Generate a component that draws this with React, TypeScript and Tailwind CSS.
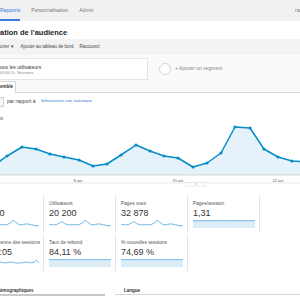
import React from 'react';

// main chart points (x, y) in page px, chart box starts at y=110
const pts: [number, number][] = [
  [-7, 166], [7, 156], [22, 147], [36, 149], [50, 154], [64, 157], [79, 160], [93, 166],
  [107, 164], [121, 155], [136, 145], [150, 151], [164, 156], [178, 158], [193, 167],
  [207, 163], [221, 153], [235, 127], [250, 128], [264, 149], [278, 157], [292, 161], [306, 162],
];

const waveA = [0.4, 0.35, 0.3, 0.35, 0.55, 0.8, 0.5, 0.35, 0.3, 0.3, 0.35, 0.3, 0.4, 0.6, 0.95, 0.7, 0.4, 0.3, 0.35, 0.45, 0.4, 0.3, 0.25, 0.2, 0.15];
const waveB = [0.5, 0.45, 0.5, 0.55, 0.5, 0.45, 0.4, 0.45, 0.5, 0.55, 0.5, 0.45, 0.5, 0.55, 0.5, 0.45, 0.4, 0.45, 0.5, 0.55, 0.5, 0.45, 0.5, 0.85, 0.45];
const flat = [0.9, 0.88, 0.9, 0.92, 0.9, 0.88, 0.9, 0.91, 0.9, 0.88, 0.9, 0.93, 0.9, 0.88, 0.9, 0.9, 0.89, 0.9, 0.92, 0.9, 0.88, 0.9, 0.91, 0.9, 0.9];

const Spark = ({ vals, fill = false, w = 62, h = 9 }: { vals: number[]; fill?: boolean; w?: number; h?: number }) => {
  const step = w / (vals.length - 1);
  const d = vals
    .map((v, i) => `${i ? 'L' : 'M'}${(i * step).toFixed(1)},${(1 + (1 - v) * (h - 2)).toFixed(1)}`)
    .join(' ');
  return (
    <svg width={w} height={h} className="block">
      {fill && <path d={`${d} L${w},${h} L0,${h} Z`} fill="#dcedf7" />}
      <path d={d} fill="none" stroke="#4ea6da" strokeWidth={0.8} />
    </svg>
  );
};

type Metric = { label: string; value: string; vals: number[]; fill?: boolean } | null;

const rows: Metric[][] = [
  [
    { label: 'Sessions', value: '26 250', vals: waveA },
    { label: 'Utilisateurs', value: '20 200', vals: waveA },
    { label: 'Pages vues', value: '32 878', vals: waveA },
    { label: 'Pages/session', value: '1,31', vals: flat, fill: true },
  ],
  [
    { label: 'Durée moyenne des sessions', value: '00:01:05', vals: waveB },
    { label: 'Taux de rebond', value: '84,11 %', vals: flat, fill: true },
    { label: '% nouvelles sessions', value: '74,69 %', vals: flat, fill: true },
    null,
  ],
];

const App: React.FC = () => {
  const line = pts.map((p, i) => `${i ? 'L' : 'M'}${p[0]},${p[1] - 110}`).join(' ');
  const area = `${line} L306,65 L-7,65 Z`;

  return (
    <div className="w-[300px] h-[300px] overflow-hidden bg-white text-[#333] font-['Liberation_Sans',Arial,sans-serif] flex flex-col">
      {/* Top nav */}
      <div className="h-[21px] shrink-0 bg-[#f1f1f1] flex items-stretch text-[5px] whitespace-nowrap">
        <div className="flex items-center border-b-2 border-[#3a7be0] text-[#3a7be0] pt-[2px]">Rapports</div>
        <div className="flex items-center ml-[11px] text-[#777]">Personnalisation</div>
        <div className="flex items-center ml-[11px] text-[#777]">Admin</div>
        <div className="ml-auto w-[5px] overflow-hidden flex items-center text-[#777]">rapports</div>
      </div>

      {/* Title */}
      <div className="h-[18px] shrink-0 flex items-end pb-[2px] text-[7.5px] leading-[9px] font-bold text-[#222] whitespace-nowrap">
        ation de l'audience
      </div>

      {/* Toolbar */}
      <div className="h-[16px] shrink-0 bg-[#f3f3f3] flex items-center text-[4.5px] text-[#444] whitespace-nowrap">
        <span>orter ▾</span>
        <span className="ml-[7px]">Ajouter au tableau de bord</span>
        <span className="ml-[6px]">Raccourci</span>
      </div>

      {/* Segments */}
      <div className="h-[26px] shrink-0 bg-[#fafafa] flex pt-[3px] pb-[1px]">
        <div className="w-[148px] bg-white border border-l-0 border-[#e4e4e4] flex flex-col justify-center whitespace-nowrap">
          <div className="text-[5px] leading-[6px] text-[#333]">ous les utilisateurs</div>
          <div className="text-[4px] leading-[5px] text-[#888]">00,00 %, Sessions</div>
        </div>
        <div className="flex-1 flex items-center pl-[11px] gap-[4px]">
          <div className="w-[12px] h-[12px] rounded-full border border-[#d6d6d6] bg-white" />
          <span className="text-[5px] text-[#888] whitespace-nowrap">+ Ajouter un segment</span>
        </div>
      </div>

      {/* Tabs */}
      <div className="h-[12px] shrink-0 flex border-b border-[#d9d9d9] bg-[#fafafa]">
        <div className="w-[16px] bg-white border-r border-t border-[#d9d9d9] -mb-px flex items-center text-[4.5px] font-bold text-[#333]">
          emble
        </div>
      </div>

      {/* Compare row */}
      <div className="h-[17px] shrink-0 flex items-center whitespace-nowrap">
        <div className="w-[4px] h-[10px] border border-l-0 border-[#cfcfcf] bg-[#f6f6f6]" />
        <span className="ml-[3px] text-[5px] text-[#444]">par rapport à</span>
        <span className="ml-[5px] text-[4.2px] text-[#3a7be0]">Sélectionner une statistique</span>
      </div>

      {/* Chart */}
      <div className="h-[80px] shrink-0 relative">
        <span className="absolute top-[5px] left-[-17px] text-[5px] leading-[6px] text-[#555]">Sessions</span>
        <svg width={300} height={80} className="block">
          <path d={area} fill="#e5f2fa" />
          <line x1={0} y1={65} x2={300} y2={65} stroke="#cfcfcf" strokeWidth={0.8} />
          <path d={line} fill="none" stroke="#058dc7" strokeWidth={1.5} strokeLinejoin="round" />
          {pts.map(([x, y], i) => (
            <circle key={i} cx={x} cy={y - 110} r={1.6} fill="#058dc7" />
          ))}
          <text x={78} y={71.5} fontSize={4} fill="#555" textAnchor="middle">8 avr</text>
          <text x={178} y={71.5} fontSize={4} fill="#555" textAnchor="middle">15 avr</text>
          <text x={278} y={71.5} fontSize={4} fill="#555" textAnchor="middle">22 avr</text>
          <line x1={0} y1={73} x2={300} y2={73} stroke="#e2e2e2" strokeWidth={0.8} />
          <rect x={186} y={72.5} width={19} height={3.5} fill="#fff" stroke="#d4d4d4" strokeWidth={0.5} />
          <path d="M194.5,73.5 L196.5,73.5 L195.5,75 Z" fill="#999" />
        </svg>
      </div>

      {/* Metrics */}
      <div className="shrink-0 pt-[5px] flex flex-col gap-[2px]">
        {rows.map((row, ri) => (
          <div key={ri} className="flex -ml-[28px] h-[37px]">
            {row.map((m, ci) => (
              <div
                key={ci}
                className={`w-[72px] shrink-0 pl-[5px] pt-[6px] whitespace-nowrap ${m ? 'border-r border-[#e6e6e6]' : ''}`}
              >
                {m && (
                  <>
                    <div className="text-[4.8px] leading-[6px] text-[#555]">{m.label}</div>
                    <div className="mt-[1px] text-[9px] leading-[10px] text-[#333]">{m.value}</div>
                    <div className="mt-[1px]">
                      <Spark vals={m.vals} fill={m.fill} />
                    </div>
                  </>
                )}
              </div>
            ))}
          </div>
        ))}
      </div>

      {/* Bottom panels */}
      <div className="h-[27px] shrink-0 flex items-start pt-[17px] whitespace-nowrap">
        <div className="w-[133px] shrink-0 -ml-[28px] pl-[5px] border-b-2 border-[#c9c9c9] text-[4.5px] leading-[6px] font-bold text-[#333]">
          Données démographiques
        </div>
        <div className="flex-1 ml-[10px] pl-[9px] border-b border-[#d6d6d6] text-[4.5px] leading-[6px] font-bold text-[#333] h-[7px]">
          Langue
        </div>
      </div>
    </div>
  );
};

export default App;
